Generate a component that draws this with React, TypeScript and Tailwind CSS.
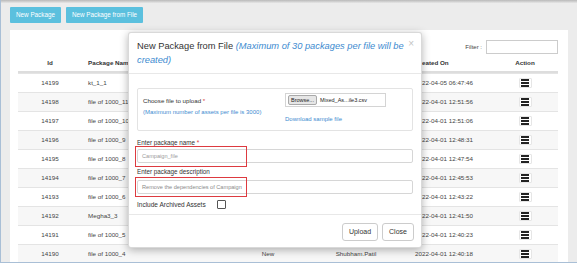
import React from "react";

const rows = [
  ["14199", "kt_1_1", "2022-04-05 06:47:46"],
  ["14198", "file of 1000_11", "2022-04-01 12:51:56"],
  ["14197", "file of 1000_10", "2022-04-01 12:51:06"],
  ["14196", "file of 1000_9", "2022-04-01 12:48:31"],
  ["14195", "file of 1000_8", "2022-04-01 12:47:54"],
  ["14194", "file of 1000_7", "2022-04-01 12:45:53"],
  ["14193", "file of 1000_6", "2022-04-01 12:43:22"],
  ["14192", "Megha3_3", "2022-04-01 12:41:50"],
  ["14191", "file of 1000_5", "2022-04-01 12:40:23"],
  ["14190", "file of 1000_4", "2022-04-01 12:40:18"],
];

function Burger() {
  return (
    <div className="w-[13px] h-[10px] bg-white border border-[#e6e6e6] rounded-[1px] flex flex-col items-center justify-center gap-[1.5px]">
      <div className="w-[8px] h-[1.4px] bg-[#222]" />
      <div className="w-[8px] h-[1.4px] bg-[#222]" />
      <div className="w-[8px] h-[1.4px] bg-[#222]" />
    </div>
  );
}

const grid = "grid grid-cols-[64px_146px_80px_96px_88px_66px]";

export default function App() {
  return (
    <div className="relative w-[577px] h-[263px] overflow-hidden bg-[#ececec] border-l border-b border-[#a9bfd6] font-['Liberation_Sans',Arial,sans-serif] text-[#333]">
      <div className="h-[3px] bg-gradient-to-b from-[#b9b9b9] to-[#e6e6e6]" />
      <div className="flex gap-[5px] ml-[9px] mt-[4px]">
        <div className="w-[51px] h-[16px] bg-[#5bc0de] text-white text-[6.3px] flex items-center justify-center rounded-[1px]">
          New Package
        </div>
        <div className="w-[77px] h-[16px] bg-[#5bc0de] text-white text-[6.3px] flex items-center justify-center rounded-[1px]">
          New Package from File
        </div>
      </div>

      <div className="ml-[9px] mt-[7px] w-[558px] h-[240px] bg-white pt-[10px]">
        <div className="flex justify-end items-center pr-[10px] gap-[4px]">
          <span className="text-[6px] text-[#444]">Filter :</span>
          <div className="w-[72px] h-[14px] border border-[#ccc]" />
        </div>
        <div className="ml-[8px] w-[540px] mt-[1px] text-[6.25px] text-[#444]">
          <div className={`${grid} h-[18px] items-center font-bold text-[#333] border-b-2 border-[#ddd]`}>
            <div className="text-center">Id</div>
            <div className="pl-[6px]">Package Name</div>
            <div className="text-center">Status</div>
            <div className="text-center">Created By</div>
            <div className="pl-[11px]">Created On</div>
            <div className="text-center">Action</div>
          </div>
          {rows.map((r, i) => (
            <div
              key={r[0]}
              className={`${grid} h-[19px] items-center border-t border-[#e4e4e4] ${i % 2 === 1 ? "bg-[#f7f7f7]" : "bg-white"}`}
            >
              <div className="text-center">{r[0]}</div>
              <div className="pl-[6px]">{r[1]}</div>
              <div className="text-center">New</div>
              <div className="text-center">Shubham.Patil</div>
              <div className="pl-[11px]">{r[2]}</div>
              <div className="flex justify-center">
                <Burger />
              </div>
            </div>
          ))}
        </div>
      </div>

      {/* Modal */}
      <div className="absolute left-[127px] top-[32px] w-[294px] h-[216px] bg-white rounded-[3px] border border-black/15 shadow-[0_2px_8px_rgba(0,0,0,0.3)] flex flex-col">
        <div className="relative h-[41px] px-[8px] pt-[6px] border-b border-[#e8e8e8] shrink-0">
          <div className="w-[272px] text-[9.3px] leading-[14px] text-[#333]">
            New Package from File{" "}
            <span className="italic text-[#3d8bd0]">
              (Maximum of 30 packages per file will be created)
            </span>
          </div>
          <div className="absolute right-[7px] top-[6px] text-[10px] leading-[10px] text-[#c4c4c4]">×</div>
        </div>

        <div className="h-[140px] px-[8px] pt-[14px] shrink-0">
          <div className="flex h-[43px] border border-[#e3e3e3] rounded-[2px]">
            <div className="w-[147px] pl-[5px] pt-[7px]">
              <div className="text-[6.2px] leading-[9px] text-[#333]">
                Choose file to upload <span className="text-[#d9363e]">*</span>
              </div>
              <div className="mt-[3px] text-[6px] leading-[8px] text-[#3d8bd0]">
                (Maximum number of assets per file is 3000)
              </div>
            </div>
            <div className="pt-[4px]">
              <div className="w-[101px] h-[14px] border border-[#d4d4d4] flex items-center pl-[2px]">
                <div className="h-[10px] px-[2px] bg-[#e6e6e6] border border-[#a9a9a9] rounded-[2px] text-[5.5px] leading-[8px] text-[#222]">
                  Browse...
                </div>
                <span className="ml-[3px] text-[5.5px] text-[#222]">Mixed_As...ile3.csv</span>
              </div>
              <div className="mt-[8px] text-[6px] leading-[8px] text-[#3d8bd0]">Download sample file</div>
            </div>
          </div>

          <div className="mt-[8px] text-[6.3px] leading-[8px] text-[#333]">
            Enter package name <span className="text-[#d9363e]">*</span>
          </div>
          <div className="relative mt-[2px]">
            <div className="h-[14px] border border-[#d6d6d6] rounded-[2px] flex items-center pl-[4px] text-[5.6px] text-[#9a9a9a]">
              Campaign_file
            </div>
            <div className="absolute -left-[2px] -top-[3px] w-[112px] h-[21px] border-[1.5px] border-[#dd3a40]" />
          </div>

          <div className="mt-[5px] text-[6.3px] leading-[8px] text-[#333]">Enter package description</div>
          <div className="relative mt-[4px]">
            <div className="h-[14px] border border-[#d6d6d6] rounded-[2px] flex items-center pl-[4px] text-[5.6px] text-[#8a8a8a]">
              Remove the dependencies of Campaign
            </div>
            <div className="absolute -left-[2px] -top-[3px] w-[112px] h-[20px] border-[1.5px] border-[#dd3a40]" />
          </div>

          <div className="mt-[6px] flex items-center h-[9px]">
            <span className="text-[6.5px] text-[#333]">Include Archived Assets</span>
            <div className="ml-[11px] w-[9px] h-[9px] border border-[#555] rounded-[1px] bg-white" />
          </div>
        </div>

        <div className="flex-1 border-t border-[#e8e8e8] flex justify-end items-start pt-[8px] pr-[7px] gap-[4px]">
          <div className="w-[36px] h-[18px] border border-[#ccc] rounded-[3px] text-[7px] flex items-center justify-center text-[#333]">
            Upload
          </div>
          <div className="w-[32px] h-[18px] border border-[#ccc] rounded-[3px] text-[7px] flex items-center justify-center text-[#333]">
            Close
          </div>
        </div>
      </div>
    </div>
  );
}
